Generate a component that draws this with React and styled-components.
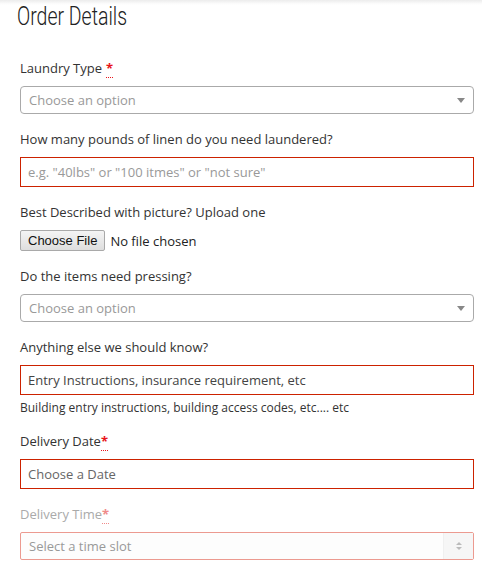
import styled, { createGlobalStyle } from "styled-components";

const GlobalStyle = createGlobalStyle`
  html, body {
    margin: 0;
    padding: 0;
    background: #fff;
  }
  body {
    font-family: "Open Sans", "Liberation Sans", sans-serif;
    color: #333;
  }
  * {
    box-sizing: border-box;
  }
`;

const TopShade = styled.div`
  height: 5px;
  margin-right: 8px;
  background: linear-gradient(#ececec, #fbfbfb 70%, #fff);
`;

const Page = styled.div`
  padding: 0 16px 0 20px;
`;

const Title = styled.h1`
  margin: -4px 0 26px -3px;
  font-family: Roboto, "Liberation Sans", sans-serif;
  font-weight: 300;
  font-size: 25px;
  line-height: 32px;
  color: #222;
  span {
    display: inline-block;
    transform: scaleX(0.78);
    transform-origin: left center;
  }
`;

const Field = styled.div`
  margin-bottom: 16px;
`;

const Label = styled.label`
  display: block;
  font-size: 13px;
  line-height: 18px;
  margin-bottom: 9px;
  color: ${(p) => (p.disabled ? "#aaa" : "#333")};
`;

const Req = styled.abbr`
  color: ${(p) => (p.disabled ? "#f08a8a" : "#e8141b")};
  font-weight: 700;
  text-decoration: none;
  border-bottom: 1px dotted currentColor;
  line-height: 1;
  margin-left: ${(p) => (p.spaced ? "4px" : "0")};
`;

const SelectBox = styled.div`
  position: relative;
  display: flex;
  align-items: center;
  height: 28px;
  padding-left: 8px;
  border: 1px solid ${(p) => (p.disabled ? "#ec9a90" : "#aaa")};
  border-radius: ${(p) => (p.disabled ? "2px" : "4px")};
  background: ${(p) => (p.disabled ? "#fdfdfd" : "#fff")};
  font-size: 13px;
  color: #999;
`;

const Caret = styled.span`
  position: absolute;
  right: 8px;
  top: 50%;
  margin-top: -2px;
  border-style: solid;
  border-width: 5px 4px 0 4px;
  border-color: #888 transparent transparent transparent;
`;

const Spinner = styled.span`
  position: absolute;
  right: 0;
  top: 0;
  bottom: 0;
  width: 30px;
  background: #f6f6f6;
  border-left: 1px solid #f0f0f0;
  display: flex;
  flex-direction: column;
  align-items: center;
  justify-content: center;
  gap: 2px;
  &::before,
  &::after {
    content: "";
    border-style: solid;
    border-color: transparent;
  }
  &::before {
    border-width: 0 3px 3px 3px;
    border-bottom-color: #bbb;
  }
  &::after {
    border-width: 3px 3px 0 3px;
    border-top-color: #bbb;
  }
`;

const TextInput = styled.input`
  display: block;
  width: 100%;
  height: 30px;
  padding: 0 7px;
  border: 1px solid #cc2200;
  border-radius: 0;
  outline: none;
  font-family: "Open Sans", "Liberation Sans", sans-serif;
  font-size: 13px;
  color: #444;
  caret-color: #222;
  &::placeholder {
    color: ${(p) => (p.$darkHint ? "#666" : "#999")};
  }
`;

const Help = styled.div`
  margin-top: 4px;
  font-size: 12px;
  line-height: 17px;
  color: #333;
`;

const FileRow = styled.div`
  display: flex;
  align-items: center;
  gap: 5px;
  height: 21px;
`;

const FileButton = styled.button`
  height: 21px;
  padding: 0 7px;
  border: 1px solid #a9a9a9;
  border-radius: 2px;
  background: linear-gradient(#f4f4f4, #dedede);
  font-family: "Liberation Sans", Arial, sans-serif;
  font-size: 13px;
  color: #111;
`;

const FileStatus = styled.span`
  font-size: 13px;
  color: #222;
`;

export default function App() {
  return (
    <>
      <GlobalStyle />
      <TopShade />
      <Page>
        <Title>
          <span>Order Details</span>
        </Title>

        <Field>
          <Label>
            Laundry Type<Req spaced title="required">*</Req>
          </Label>
          <SelectBox>
            Choose an option
            <Caret />
          </SelectBox>
        </Field>

        <Field>
          <Label>How many pounds of linen do you need laundered?</Label>
          <TextInput placeholder={'e.g. "40lbs" or "100 itmes" or "not sure"'} />
        </Field>

        <Field>
          <Label>Best Described with picture? Upload one</Label>
          <FileRow>
            <FileButton type="button">Choose File</FileButton>
            <FileStatus>No file chosen</FileStatus>
          </FileRow>
        </Field>

        <Field>
          <Label>Do the items need pressing?</Label>
          <SelectBox>
            Choose an option
            <Caret />
          </SelectBox>
        </Field>

        <Field>
          <Label>Anything else we should know?</Label>
          <TextInput defaultValue="Entry Instructions, insurance requirement, etc" />
          <Help>Building entry instructions, building access codes, etc.... etc</Help>
        </Field>

        <Field>
          <Label>
            Delivery Date<Req title="required">*</Req>
          </Label>
          <TextInput $darkHint placeholder="Choose a Date" />
        </Field>

        <Field>
          <Label disabled>
            Delivery Time<Req disabled title="required">*</Req>
          </Label>
          <SelectBox disabled>
            Select a time slot
            <Spinner />
          </SelectBox>
        </Field>
      </Page>
    </>
  );
}
